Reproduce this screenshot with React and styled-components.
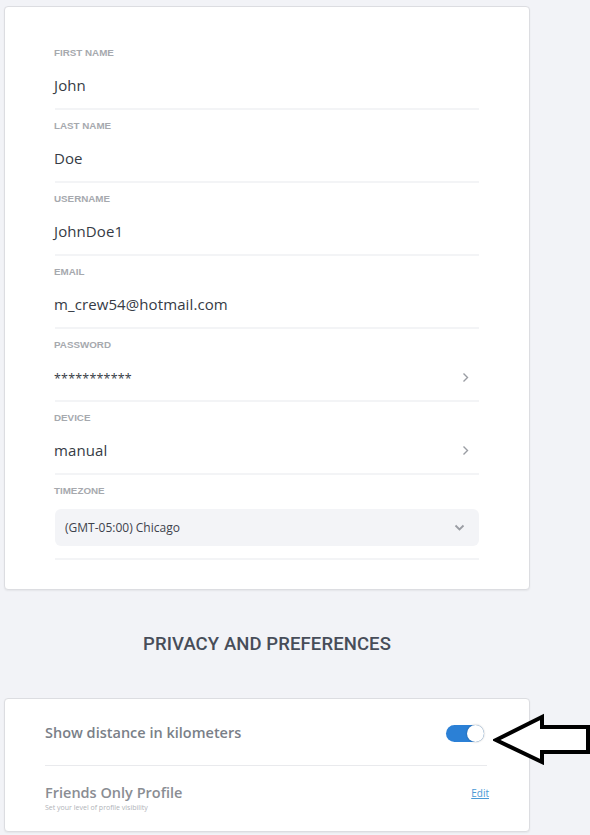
import React from "react";
import styled, { createGlobalStyle } from "styled-components";

const GlobalStyle = createGlobalStyle`
  html, body {
    margin: 0;
    padding: 0;
    background: #f2f3f7;
  }
`;

const Page = styled.div`
  position: relative;
  width: 590px;
  height: 835px;
  padding: 6px 0 0 4px;
  box-sizing: border-box;
  overflow: hidden;
  font-family: "Open Sans", "Liberation Sans", sans-serif;
`;

const Column = styled.div`
  width: 526px;
  display: flex;
  flex-direction: column;
`;

const Card = styled.div`
  background: #ffffff;
  border: 1px solid #dcdde1;
  border-radius: 4px;
  box-shadow: 0 1px 2px rgba(0, 0, 0, 0.06);
  box-sizing: border-box;
  padding: ${(p) => p.$padding};
`;

const Field = styled.div`
  padding: 10px 0 12px;
  border-bottom: 2px solid #f3f4f6;
`;

const Label = styled.div`
  margin-left: -1px;
  font-family: "Liberation Sans", Arial, sans-serif;
  font-weight: 700;
  font-size: 9.8px;
  line-height: 12px;
  color: #a6a9ae;
  text-transform: uppercase;
`;

const ValueRow = styled.div`
  margin-top: 15px;
  height: 22px;
  display: flex;
  align-items: center;
  justify-content: space-between;
`;

const Value = styled.span`
  margin-left: -1px;
  padding-top: ${(p) => (p.$masked ? "4px" : "0")};
  font-size: ${(p) => (p.$masked ? "12.5px" : "15px")};
  font-weight: 500;
  line-height: 22px;
  color: #363b45;
  letter-spacing: ${(p) => (p.$masked ? "0.2px" : "0.1px")};
`;

const Chevron = styled.svg`
  margin-right: 10px;
  flex: none;
`;

const Select = styled.div`
  margin-top: 12px;
  height: 37px;
  border-radius: 6px;
  background: #f3f4f7;
  display: flex;
  align-items: center;
  justify-content: space-between;
  padding: 0 14px 0 10px;
  font-size: 12px;
  color: #3d424c;
`;

const Heading = styled.h2`
  margin: 44px 0 44px;
  text-align: center;
  font-family: Roboto, "Liberation Sans", sans-serif;
  font-weight: 500;
  font-size: 18.5px;
  line-height: 20px;
  letter-spacing: 0.1px;
  color: #474d59;
`;

const PrefRow = styled.div`
  display: flex;
  align-items: ${(p) => (p.$top ? "flex-start" : "center")};
  justify-content: space-between;
  padding: ${(p) => p.$padding};
  border-bottom: ${(p) => (p.$divider ? "1px solid #e9eaed" : "none")};
`;

const PrefTitle = styled.div`
  font-family: "Open Sans", "Liberation Sans", sans-serif;
  font-weight: 600;
  font-size: 14.5px;
  line-height: 20px;
  color: ${(p) => p.$color};
`;

const PrefHint = styled.div`
  font-size: 7px;
  line-height: 10px;
  color: #b0b3b8;
`;

const Toggle = styled.div`
  width: 38px;
  height: 17px;
  border-radius: 9px;
  background: #2b80d6;
  display: flex;
  justify-content: flex-end;
  align-items: center;
`;

const Knob = styled.div`
  width: 17px;
  height: 17px;
  border-radius: 50%;
  background: #ffffff;
  box-shadow: 0 0 2px rgba(0, 0, 0, 0.35);
`;

const EditLink = styled.a`
  margin-top: 4px;
  margin-right: -2px;
  font-size: 10px;
  line-height: 12px;
  color: #4a9ad6;
  text-decoration: underline;
  cursor: pointer;
`;

const Arrow = styled.svg`
  position: absolute;
  left: 493px;
  top: 713px;
`;

const fields = [
  { label: "First Name", value: "John" },
  { label: "Last Name", value: "Doe" },
  { label: "Username", value: "JohnDoe1" },
  { label: "Email", value: "m_crew54@hotmail.com" },
  { label: "Password", value: "***********", masked: true, more: true },
  { label: "Device", value: "manual", more: true },
];

function ChevronRight() {
  return (
    <Chevron width="7" height="11" viewBox="0 0 7 11">
      <path d="M1.5 1.5 L5.5 5.5 L1.5 9.5" fill="none" stroke="#9a9da3" strokeWidth="1.4" />
    </Chevron>
  );
}

export default function App() {
  return (
    <Page>
      <GlobalStyle />
      <Column>
        <Card $padding="30px 50px 29px">
          {fields.map((f) => (
            <Field key={f.label}>
              <Label>{f.label}</Label>
              <ValueRow>
                <Value $masked={f.masked}>{f.value}</Value>
                {f.more && <ChevronRight />}
              </ValueRow>
            </Field>
          ))}
          <Field>
            <Label>Timezone</Label>
            <Select>
              <span>(GMT-05:00) Chicago</span>
              <svg width="11" height="7" viewBox="0 0 11 7">
                <path d="M1.5 1.5 L5.5 5.5 L9.5 1.5" fill="none" stroke="#9a9da3" strokeWidth="1.8" />
              </svg>
            </Select>
          </Field>
        </Card>

        <Heading>PRIVACY AND PREFERENCES</Heading>

        <Card $padding="0 42px 0 40px">
          <PrefRow $divider $padding="24px 3px 22px 0">
            <PrefTitle $color="#7a7f88">Show distance in kilometers</PrefTitle>
            <Toggle>
              <Knob />
            </Toggle>
          </PrefRow>
          <PrefRow $top $padding="17px 0 18px">
            <div>
              <PrefTitle $color="#8a8d93">Friends Only Profile</PrefTitle>
              <PrefHint>Set your level of profile visibility</PrefHint>
            </div>
            <EditLink>Edit</EditLink>
          </PrefRow>
        </Card>
      </Column>

      <Arrow width="97" height="52" viewBox="0 0 97 52">
        <polygon
          points="3,27 49,4 49,14 95,14 95,39 49,39 49,49"
          fill="#ffffff"
          stroke="#000000"
          strokeWidth="4"
          strokeLinejoin="miter"
        />
      </Arrow>
    </Page>
  );
}
